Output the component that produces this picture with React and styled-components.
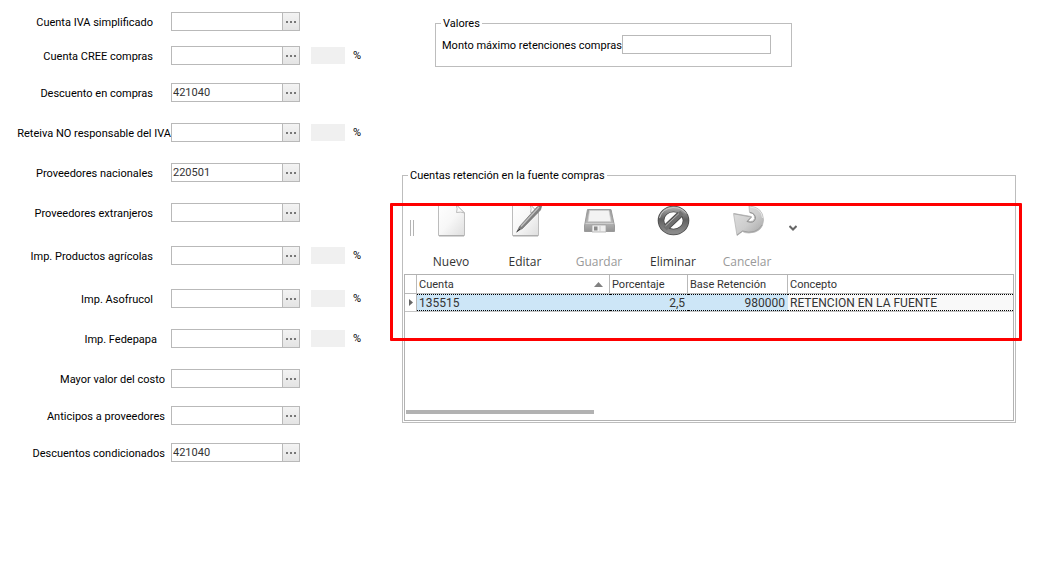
import React, { useState } from 'react';
import styled, { createGlobalStyle, css } from 'styled-components';

const GlobalStyle = createGlobalStyle`
  * {
    box-sizing: border-box;
  }

  body {
    margin: 0;
    background: #fff;
    color: #000;
    font-family: Roboto, 'Liberation Sans', sans-serif;
    font-size: 11px;
    line-height: 14px;
  }

  input,
  button {
    font: inherit;
    color: inherit;
    border-radius: 0;
  }
`;

const LINE = '#b9b9b9';

const Page = styled.main`
  display: flex;
  align-items: flex-start;
  padding: 12px 41px 40px 0;
`;

/* left side: accounts */

const AccountForm = styled.form`
  flex: 0 0 402px;
  min-width: 0;
`;

const rowHeights = { tight: 34, snug: 37, base: 40, loose: 43 };
const labelGaps = { none: 0, near: 6, mid: 14, far: 18 };

const AccountRow = styled.div`
  display: flex;
  align-items: flex-start;
  height: ${({ $size }) => rowHeights[$size]}px;
`;

const AccountLabel = styled.label`
  flex: 0 0 171px;
  padding: 4px ${({ $gap }) => labelGaps[$gap]}px 0 0;
  text-align: right;
  white-space: nowrap;
`;

const LookupBox = styled.div`
  display: flex;
  flex: 0 0 129px;
  min-width: 0;
  height: 19px;
  border: 1px solid ${LINE};
`;

const LookupInput = styled.input`
  flex: 1;
  min-width: 0;
  padding: 0 1px;
  border: none;
  outline: none;
  background: #fff;
  color: #333;
`;

const LookupButton = styled.button`
  display: flex;
  flex: 0 0 17px;
  align-items: center;
  justify-content: center;
  padding: 0;
  border: none;
  border-left: 1px solid ${LINE};
  background: linear-gradient(#f3f3f3, #e4e4e4);
  color: #777;
`;

const PercentInput = styled.input`
  width: 34px;
  height: 17px;
  margin: 1px 8px 0 11px;
  padding: 0 2px;
  border: none;
  background: #f0f0f0;
`;

const PercentSign = styled.span`
  padding-top: 3px;
`;

/* right side: groups */

const Groups = styled.div`
  flex: 1;
  min-width: 0;
  padding-top: 4px;
`;

const Group = styled.fieldset`
  min-width: 0;
  margin: 0;
  padding: 0 1px 1px;
  border: 1px solid #bdbdbd;
`;

const ValuesGroup = styled(Group)`
  display: flex;
  width: 357px;
  margin: 0 0 101px 33px;
  padding: 5px 10px 12px 6px;
`;

const GroupTitle = styled.legend`
  margin-left: ${({ $inset }) => ($inset ? 4 : -1)}px;
  padding: 1px 2px 0;
  line-height: 13px;
`;

const AmountLabel = styled.label`
  flex: 1;
  min-width: 0;
  padding-top: 4px;
  white-space: nowrap;
`;

const AmountInput = styled.input`
  flex: 0 0 149px;
  min-width: 0;
  height: 19px;
  margin-right: 10px;
  padding: 0 2px;
  border: 1px solid ${LINE};
  outline: none;
`;

const RetentionArea = styled.div`
  position: relative;
`;

const Highlight = styled.div`
  position: absolute;
  top: 35px;
  right: -6px;
  left: -12px;
  height: 138px;
  border: 3px solid #fe0000;
  border-radius: 1px;
  pointer-events: none;
`;

const Toolbar = styled.div`
  display: flex;
  align-items: center;
  height: 92px;
  padding-left: 6px;
`;

const Grip = styled.span`
  width: 4px;
  height: 16px;
  border: solid #b4b4b4;
  border-width: 0 1px;
`;

const ToolButton = styled.button`
  display: flex;
  flex: 0 0 74px;
  flex-direction: column;
  align-items: center;
  gap: 16px;
  height: 91px;
  padding: 21px 0 4px;
  border: none;
  background: none;
  color: #333;
  font-family: 'Open Sans', 'Noto Sans', sans-serif;
  font-size: 12px;
  line-height: 16px;

  &:disabled {
    color: #999;
  }
`;

const MoreButton = styled.button`
  display: flex;
  margin-left: 5px;
  padding: 0;
  border: none;
  background: none;
`;

const GridFrame = styled.div`
  display: flex;
  flex-direction: column;
  justify-content: space-between;
  height: 147px;
  padding-bottom: 6px;
  border: 1px solid #b2b2b2;
`;

const Table = styled.table`
  width: 100%;
  table-layout: fixed;
  border-collapse: separate;
  border-spacing: 0;
  color: #333;
`;

const Column = styled.col`
  width: ${({ $width }) => ($width ? `${$width}px` : 'auto')};
`;

const HeadCell = styled.th`
  height: 19px;
  padding: 1px 2px 0;
  border-right: 1px solid ${LINE};
  border-bottom: 1px solid ${LINE};
  font-weight: normal;
  text-align: left;
  white-space: nowrap;

  &:last-child {
    border-right: none;
  }
`;

const SortedHead = styled.div`
  display: flex;
  align-items: center;
  justify-content: space-between;
  padding-right: 4px;
`;

const Cell = styled.td`
  height: 17px;
  padding: 1px 3px 0 2px;
  border: dotted #000;
  border-width: 1px 0;
  box-shadow: 0 1px 0 #c4c4c4;
  background: ${({ $selected }) => ($selected ? '#cde6f7' : '#f9f9f9')};
  font-size: 12px;
  text-align: ${({ $numeric }) => ($numeric ? 'right' : 'left')};
  line-height: 14px;
  white-space: nowrap;
`;

const MarkerCell = styled.td`
  padding: 0;
  border-right: 1px solid ${LINE};
  box-shadow: 0 1px 0 #c4c4c4;
  text-align: center;
  line-height: 0;
`;

const ScrollThumb = styled.div`
  width: 31%;
  height: 4px;
  margin-left: 1px;
  background: #b2b2b2;
`;

const icon = css`
  display: block;
  flex: none;
  width: 34px;
  height: 34px;
  overflow: visible;
`;

const ToolSvg = styled.svg.attrs({ viewBox: '0 0 34 34', 'aria-hidden': true })`
  ${icon}
`;

function Sheet({ id }) {
  return (
    <>
      <defs>
        <linearGradient id={id} x1="0" y1="0" x2="1" y2="1">
          <stop offset="0" stopColor="#fff" />
          <stop offset="0.5" stopColor="#f7f7f7" />
          <stop offset="1" stopColor="#dedede" />
        </linearGradient>
      </defs>
      <path d="M4.5 0.5H22L30.5 9V31.5H4.5Z" fill={`url(#${id})`} stroke="#bcbcbc" />
      <path d="M5 32H30" stroke="#999" strokeWidth="0.8" />
      <path d="M22 0.5Q24 5 22.5 8.5Q27 7.5 30.5 9Z" fill="#fafafa" stroke="#b5b5b5" strokeWidth="0.9" />
    </>
  );
}

function NewIcon() {
  return (
    <ToolSvg>
      <Sheet id="newSheet" />
    </ToolSvg>
  );
}

function EditIcon() {
  return (
    <ToolSvg>
      <Sheet id="editSheet" />
      <path d="M9 27.5L11.5 22.5L29 3L34 1L32.5 6L14.5 24.5Z" fill="#808080" stroke="#6a6a6a" strokeWidth="0.6" />
      <path d="M13 22.5L31 3" stroke="#c0c0c0" strokeWidth="1.3" />
      <path d="M8.5 28L12 25" stroke="#333" />
    </ToolSvg>
  );
}

function SaveIcon() {
  return (
    <ToolSvg>
      <defs>
        <linearGradient id="floppy" x1="0" y1="0" x2="0" y2="1">
          <stop offset="0" stopColor="#9c9c9c" />
          <stop offset="0.6" stopColor="#b4b4b4" />
          <stop offset="1" stopColor="#949494" />
        </linearGradient>
      </defs>
      <path d="M5.5 5.5H29L32.5 22V27.5H2.5V22Z" fill="url(#floppy)" stroke="#9a9a9a" />
      <path d="M7.5 6.5H27L29 17.5H6Z" fill="#f3f3f3" stroke="#d0d0d0" strokeWidth="0.7" />
      <path d="M3.5 19.5H31.5" stroke="#cdcdcd" />
      <path d="M10 21H24V28H10Z" fill="#efefef" stroke="#a0a0a0" strokeWidth="0.7" />
      <rect x="12" y="22.5" width="3.5" height="4" fill="#8a8a8a" />
      <path d="M18 22V27.5" stroke="#ccc" />
    </ToolSvg>
  );
}

function DeleteIcon() {
  return (
    <ToolSvg>
      <defs>
        <linearGradient id="forbid" x1="0" y1="0" x2="0" y2="1">
          <stop offset="0" stopColor="#a2a2a2" />
          <stop offset="0.45" stopColor="#606060" />
          <stop offset="1" stopColor="#8a8a8a" />
        </linearGradient>
      </defs>
      <ellipse cx="17.5" cy="16.5" rx="12.5" ry="11.5" fill="none" stroke="#4a4a4a" strokeWidth="6.6" />
      <path d="M9.500 24L25.500 9" stroke="#4a4a4a" strokeWidth="6.6" />
      <ellipse cx="17.5" cy="16.5" rx="12.5" ry="11.5" fill="none" stroke="url(#forbid)" strokeWidth="5" />
      <path d="M9 24.500L26 8.500" stroke="#707070" strokeWidth="5" />
      <path d="M3.500 14Q6 4.500 17 3.500Q26 3.500 30 9.500" fill="none" stroke="#c6c6c6" />
      <path d="M9.500 22L23 9.500" stroke="#b0b0b0" />
    </ToolSvg>
  );
}

function CancelIcon() {
  return (
    <ToolSvg>
      <defs>
        <linearGradient id="undo" x1="0" y1="0" x2="1" y2="1">
          <stop offset="0" stopColor="#e2e2e2" />
          <stop offset="0.55" stopColor="#cdcdcd" />
          <stop offset="1" stopColor="#a2a2a2" />
        </linearGradient>
      </defs>
      <path
        d="M19 2Q33 3 33.5 16Q33 28.500 19 29Q15 29 12.500 27.500L7 31.500L3.500 9.500L21.500 12.500L18 17Q23.500 18.500 24.500 14.500Q25 9 19.500 8.500Z"
        fill="url(#undo)"
        stroke="#b6b6b6"
        strokeWidth="0.8"
      />
      <path d="M21.500 13L17 17.500Q24 20 25.500 14.500Q25.500 9.500 20 8.500" fill="none" stroke="#8f8f8f" />
      <path d="M4 9.800L21 13" fill="none" stroke="#adadad" />
      <path d="M7 31L12.500 27Q26 31 32 21" fill="none" stroke="#a0a0a0" />
      <path d="M20 3Q31.500 4 32.500 14" fill="none" stroke="#eee" strokeWidth="0.8" />
    </ToolSvg>
  );
}

const accounts = [
  { id: 'iva', label: 'Cuenta IVA simplificado', value: '', size: 'tight', gap: 'far' },
  { id: 'cree', label: 'Cuenta CREE compras', value: '', size: 'snug', gap: 'far', percent: true },
  { id: 'descuento', label: 'Descuento en compras', value: '421040', size: 'base', gap: 'far' },
  { id: 'reteiva', label: 'Reteiva NO responsable del IVA', value: '', size: 'base', gap: 'none', percent: true },
  { id: 'nacionales', label: 'Proveedores nacionales', value: '220501', size: 'base', gap: 'far' },
  { id: 'extranjeros', label: 'Proveedores extranjeros', value: '', size: 'loose', gap: 'far' },
  { id: 'agricolas', label: 'Imp. Productos agrícolas', value: '', size: 'loose', gap: 'far', percent: true },
  { id: 'asofrucol', label: 'Imp. Asofrucol', value: '', size: 'base', gap: 'far', percent: true },
  { id: 'fedepapa', label: 'Imp. Fedepapa', value: '', size: 'base', gap: 'mid', percent: true },
  { id: 'costo', label: 'Mayor valor del costo', value: '', size: 'snug', gap: 'near' },
  { id: 'anticipos', label: 'Anticipos a proveedores', value: '', size: 'snug', gap: 'near' },
  { id: 'condicionados', label: 'Descuentos condicionados', value: '421040', size: 'snug', gap: 'near' },
];

const tools = [
  { label: 'Nuevo', Icon: NewIcon },
  { label: 'Editar', Icon: EditIcon },
  { label: 'Guardar', Icon: SaveIcon, disabled: true },
  { label: 'Eliminar', Icon: DeleteIcon },
  { label: 'Cancelar', Icon: CancelIcon, disabled: true },
];

function AccountField({ account }) {
  const [value, setValue] = useState(account.value);

  return (
    <AccountRow $size={account.size}>
      <AccountLabel htmlFor={account.id} $gap={account.gap}>
        {account.label}
      </AccountLabel>
      <LookupBox>
        <LookupInput id={account.id} value={value} onChange={(e) => setValue(e.target.value)} />
        <LookupButton type="button" aria-label={`Buscar ${account.label}`}>
          <svg width="10" height="2" fill="currentColor" aria-hidden="true">
            <rect width="2" height="2" />
            <rect x="4" width="2" height="2" />
            <rect x="8" width="2" height="2" />
          </svg>
        </LookupButton>
      </LookupBox>
      {account.percent && (
        <>
          <PercentInput disabled aria-label={`Porcentaje ${account.label}`} />
          <PercentSign>%</PercentSign>
        </>
      )}
    </AccountRow>
  );
}

function RetentionTable() {
  return (
    <GridFrame>
      <Table>
        <colgroup>
          <Column $width={12} />
          <Column $width={193} />
          <Column $width={78} />
          <Column $width={100} />
          <Column />
        </colgroup>
        <thead>
          <tr>
            <HeadCell />
            <HeadCell>
              <SortedHead>
                Cuenta
                <svg width="9" height="5" aria-hidden="true">
                  <path d="M0 5L4.5 0L9 5Z" fill="#808080" />
                </svg>
              </SortedHead>
            </HeadCell>
            <HeadCell>Porcentaje</HeadCell>
            <HeadCell>Base Retención</HeadCell>
            <HeadCell>Concepto</HeadCell>
          </tr>
        </thead>
        <tbody>
          <tr>
            <MarkerCell>
              <svg width="4" height="7" aria-hidden="true">
                <path d="M0 0L4 3.5L0 7Z" fill="#666" />
              </svg>
            </MarkerCell>
            <Cell $selected>135515</Cell>
            <Cell $selected $numeric>2,5</Cell>
            <Cell $selected $numeric>980000</Cell>
            <Cell>RETENCION EN LA FUENTE</Cell>
          </tr>
        </tbody>
      </Table>
      <ScrollThumb />
    </GridFrame>
  );
}

function App() {
  return (
    <>
      <GlobalStyle />
      <Page>
        <AccountForm>
          {accounts.map((account) => (
            <AccountField key={account.id} account={account} />
          ))}
        </AccountForm>
        <Groups>
          <ValuesGroup>
            <GroupTitle>Valores</GroupTitle>
            <AmountLabel htmlFor="monto">Monto máximo retenciones compras</AmountLabel>
            <AmountInput id="monto" />
          </ValuesGroup>
          <RetentionArea>
            <Group>
              <GroupTitle $inset>Cuentas retención en la fuente compras</GroupTitle>
              <Toolbar>
                <Grip />
                {tools.map(({ label, Icon, disabled }) => (
                  <ToolButton key={label} type="button" disabled={disabled}>
                    <Icon />
                    {label}
                  </ToolButton>
                ))}
                <MoreButton type="button" aria-label="Más opciones">
                  <svg width="8" height="6" fill="none" stroke="#666" strokeWidth="2" aria-hidden="true">
                    <path d="M0.5 1L4 4.5L7.5 1" />
                  </svg>
                </MoreButton>
              </Toolbar>
              <RetentionTable />
            </Group>
            <Highlight />
          </RetentionArea>
        </Groups>
      </Page>
    </>
  );
}

export default App;
